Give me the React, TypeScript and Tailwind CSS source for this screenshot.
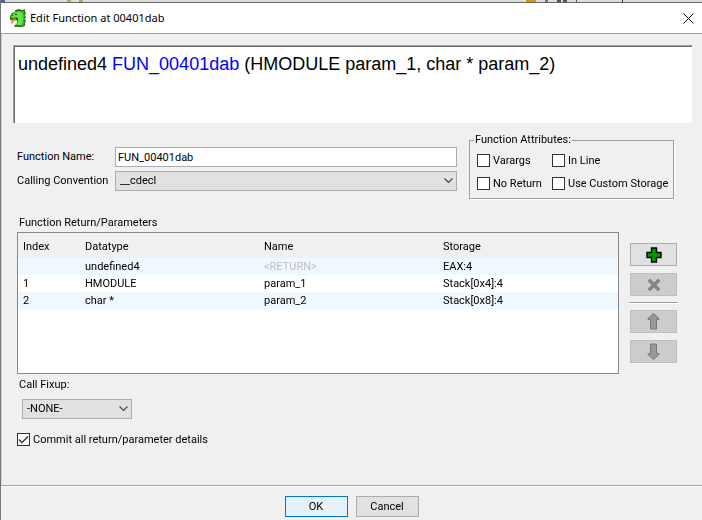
import React from "react";

const rows = [
  { index: "", type: "undefined4", name: "<RETURN>", storage: "EAX:4" },
  { index: "1", type: "HMODULE", name: "param_1", storage: "Stack[0x4]:4" },
  { index: "2", type: "char *", name: "param_2", storage: "Stack[0x8]:4" },
];

function Dragon() {
  return (
    <svg width="18" height="18" viewBox="0 0 18 18" aria-hidden="true">
      <path d="M1 7l2-3 3-1 1-2 3-1 3 1 3-1v2l1 2-1 2 1 2-1 2 1 2-1 2v3l-3 1H6l-1-1 3-3v-3l-4 1-3-1z" fill="#2f7d28" />
      <path d="M2 7l2-2 3-2 4-1 2 2 1 3v4l-1 5H7l2-3v-4l-2-1-3 1-2-1z" fill="#62e640" />
      <path d="M13 2l2 1-1 2 2 2-2 1 2 2-2 1 1 2-1 3h-1l1-5-1-5z" fill="#4fc93a" />
      <path d="M6 2l3-1M10 1l2 1" fill="none" stroke="#3c4a10" />
      <path d="M6 5h2v1H6zM3 6h1v1H3zM7 9l2 1-1 1-1-1z" fill="#173d12" />
      <path d="M1 10l2 1 3-2 1 1-2 2-2 3-1-1 1-2z" fill="#f27a2a" />
    </svg>
  );
}

function Chevron() {
  return (
    <svg className="pointer-events-none absolute right-1 top-[7px]" width="9" height="6" viewBox="0 0 9 6" fill="none" stroke="#444" strokeWidth="1.2" aria-hidden="true">
      <path d="M.5.5l4 4 4-4" />
    </svg>
  );
}

function Check({ label, checked = false }: { label: string; checked?: boolean }) {
  return (
    <label className="flex h-[13px] items-center gap-[3px] whitespace-nowrap">
      <span className="relative h-[13px] w-[13px] shrink-0">
        <input type="checkbox" defaultChecked={checked} className="peer block h-[13px] w-[13px] appearance-none border border-[#333] bg-white" />
        <svg className="pointer-events-none absolute inset-0 hidden peer-checked:block" width="13" height="13" viewBox="0 0 13 13" fill="none" stroke="#333" strokeWidth="1.3" aria-hidden="true">
          <path d="M2 6.5l3 3 6-6" />
        </svg>
      </span>
      {label}
    </label>
  );
}

function ToolButton({ label, disabled, children }: { label: string; disabled?: boolean; children: React.ReactNode }) {
  return (
    <button aria-label={label} disabled={disabled} className="flex h-[23px] items-center justify-center border border-[#adadad] bg-[#e1e1e1] disabled:border-[#bfbfbf] disabled:bg-[#cccccc]">
      {children}
    </button>
  );
}

const arrow = "M6.5.5l5.5 5v1H9.500v9.500h-6V6.500H1v-1z";

export default function App() {
  return (
    <div className="flex min-h-screen flex-col border-l border-[#77777b] bg-[#f0f0f0] font-[Roboto,'Liberation_Sans',sans-serif] text-[11px] leading-[14px] text-black">
      <div className="flex h-[2px] justify-between bg-[#dedede]">
        <div className="flex gap-[46px]">
          <span className="w-1 bg-[#3d66b8]" />
          <span className="ml-4 w-4 border-x-4 border-[#b8a860]" />
        </div>
        <div className="flex gap-[9px] pr-[79px]">
          <span className="w-[10px] bg-[#e8930c]" />
          <span className="w-[3px] bg-[#777]" />
          <span className="w-[10px] border-x-4 border-[#555]" />
          <span className="w-px bg-[#555]" />
          <span className="ml-9 w-px bg-[#333]" />
        </div>
      </div>
      <header className="flex h-[32px] items-center border-b border-t border-b-[#a0a0a0] border-t-[#666] bg-white pl-2 pr-[7px]">
        <Dragon />
        <h1 className="ml-[3px] flex-1 font-['Noto_Sans',sans-serif] text-[11px] leading-4">Edit Function at 00401dab</h1>
        <button aria-label="Close" className="p-[1px]">
          <svg width="11" height="11" viewBox="0 0 11 11" stroke="#111" fill="none"><path d="M.5.5l10 10M10.5.5l-10 10" /></svg>
        </button>
      </header>

      <main className="flex flex-1 flex-col border-b border-l border-b-[#a0a0a0] border-l-[#d0d0d0] pl-[11px] pr-[10px] pt-[11px]">
        <div className="border-l border-t border-[#a0a0a0]">
          <div className="h-[77px] border-l border-t border-[#696969] bg-white pl-[3px] pt-[6px] font-['Liberation_Sans',sans-serif] text-[18px] leading-[22px]">
            undefined4 <span className="text-[#0000ff]">FUN_00401dab</span> (HMODULE param_1, char * param_2)
          </div>
        </div>

        <div className="mt-[10px] flex items-start pl-1 pr-[18px]">
          <div className="mt-[14px] grid flex-1 grid-cols-[98px_1fr] items-center gap-y-1">
            <label htmlFor="fn">Function Name:</label>
            <input id="fn" autoFocus defaultValue="FUN_00401dab" className="h-5 w-full border border-[#abadb3] bg-white px-[2px] outline-none" />
            <label htmlFor="cc">Calling Convention</label>
            <div className="relative">
              <select id="cc" className="block h-5 w-full appearance-none border border-[#adadad] bg-[#e1e1e1] pl-1">
                <option>__cdecl</option>
              </select>
              <Chevron />
            </div>
          </div>
          <fieldset className="ml-3 h-[66px] w-[205px] border border-[#a0a0a0] pl-[7px] pr-1 shadow-[1px_1px_0_#fff]">
            <legend className="-ml-[3px] px-[1px]">Function Attributes:</legend>
            <div className="mt-[7px] grid grid-cols-[75px_1fr] gap-y-[10px]">
              <Check label="Varargs" />
              <Check label="In Line" />
              <Check label="No Return" />
              <Check label="Use Custom Storage" />
            </div>
          </fieldset>
        </div>

        <h2 className="mt-[17px] pl-[6px]">Function Return/Parameters</h2>
        <div className="mt-[2px] flex pl-1 pr-[15px]">
          <div className="h-[142px] flex-1 border border-[#828790] bg-white">
            <table className="w-full table-fixed border-collapse text-left">
              <colgroup><col className="w-[62px]" /><col className="w-[179px]" /><col className="w-[179px]" /><col /></colgroup>
              <thead>
                <tr className="h-[25px] bg-[#f0f0f0]">
                  {["Index", "Datatype", "Name", "Storage"].map((h) => (
                    <th key={h} className="p-0 pl-[5px] pt-[2px] font-normal">{h}</th>
                  ))}
                </tr>
              </thead>
              <tbody>
                {rows.map((r) => (
                  <tr key={r.type} className="h-[17px] odd:bg-[#eff7ff]">
                    <td className="p-0 pl-[5px]">{r.index}</td>
                    <td className="p-0 pl-[5px]">{r.type}</td>
                    <td className={r.index ? "p-0 pl-[5px]" : "p-0 pl-[5px] text-[#c0c0c0]"}>{r.name}</td>
                    <td className="p-0 pl-[5px]">{r.storage}</td>
                  </tr>
                ))}
              </tbody>
            </table>
          </div>
          <div className="ml-[11px] mt-[11px] flex w-[47px] flex-col gap-[7px]">
            <ToolButton label="Add">
              <svg width="16" height="16" viewBox="0 0 16 16"><path d="M5.5 1h5v4.5H15v5h-4.5V15h-5v-4.500H1v-5h4.500z" fill="#009900" stroke="#000" strokeWidth="1.4" /></svg>
            </ToolButton>
            <ToolButton label="Remove" disabled>
              <svg width="12" height="12" viewBox="0 0 12 12"><path d="M2 2l8 8M10 2l-8 8" stroke="#858585" strokeWidth="3.6" strokeLinecap="square" /></svg>
            </ToolButton>
            <hr className="-mx-px my-[-1px] h-[2px] border-b border-t border-b-white border-t-[#a0a0a0]" />
            <ToolButton label="Move up" disabled>
              <svg width="13" height="17" viewBox="0 0 13 17"><path d={arrow} fill="#999" stroke="#777" /></svg>
            </ToolButton>
            <ToolButton label="Move down" disabled>
              <svg className="rotate-180" width="13" height="17" viewBox="0 0 13 17"><path d={arrow} fill="#999" stroke="#777" /></svg>
            </ToolButton>
          </div>
        </div>

        <label htmlFor="fixup" className="mt-1 pl-[6px]">Call Fixup:</label>
        <div className="relative ml-[9px] mt-[7px] w-[110px]">
          <select id="fixup" className="block h-5 w-full appearance-none border border-[#adadad] bg-[#e1e1e1] pl-1">
            <option>-NONE-</option>
          </select>
          <Chevron />
        </div>
        <div className="mt-[14px] flex pl-1"><Check label="Commit all return/parameter details" checked /></div>
      </main>

      <footer className="flex justify-center gap-2 border-t border-white pb-[3px] pt-[9px]">
        <button className="h-[21px] w-[63px] border border-[#0078d7] bg-[#e5f1fb]">OK</button>
        <button className="h-[21px] w-[63px] border border-[#adadad] bg-[#e1e1e1]">Cancel</button>
      </footer>
    </div>
  );
}
